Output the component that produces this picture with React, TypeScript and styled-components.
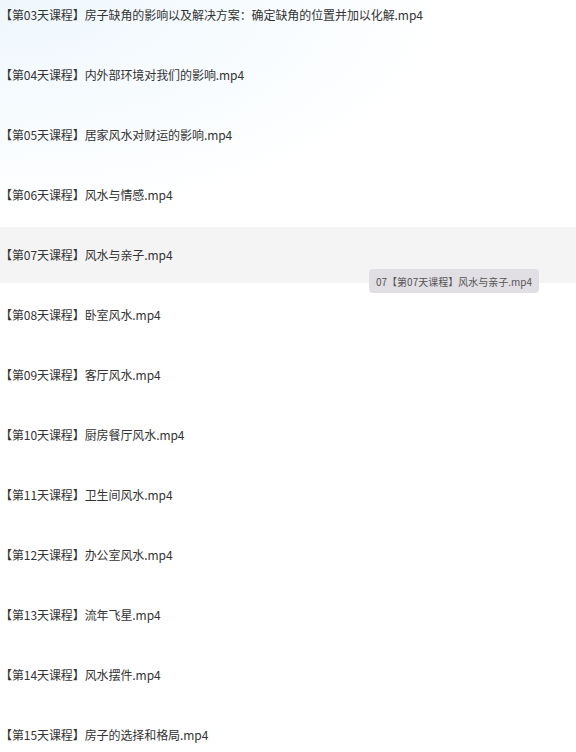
import React, { FC } from 'react'
import styled, { createGlobalStyle } from 'styled-components'

const GlobalStyle = createGlobalStyle`
  html, body {
    margin: 0;
    padding: 0;
    background: #fff;
  }
  body {
    font-family: "Noto Sans CJK SC", "Noto Sans", sans-serif;
    overflow: hidden;
  }
`

const lessons = [
  '房子缺角的影响以及解决方案：确定缺角的位置并加以化解',
  '内外部环境对我们的影响',
  '居家风水对财运的影响',
  '风水与情感',
  '风水与亲子',
  '卧室风水',
  '客厅风水',
  '厨房餐厅风水',
  '卫生间风水',
  '办公室风水',
  '流年飞星',
  '风水摆件',
  '房子的选择和格局',
]

const HOVERED = 7

const pad = (n: number) => String(n).padStart(2, '0')

const App: FC = () => (
  <>
    <GlobalStyle />
    <Page>
      <List>
        {lessons.map((title, i) => {
          const day = i + 3
          const hovered = day === HOVERED
          const name = `【第${pad(day)}天课程】${title}.mp4`
          return (
            <Row key={day} hovered={hovered}>
              <Label>{name}</Label>
              {hovered && <Tip>{pad(day)}{name}</Tip>}
            </Row>
          )
        })}
      </List>
    </Page>
  </>
)

export default App

const Page = styled.div`
  width: 576px;
  height: 752px;
  overflow: hidden;
  background:
    radial-gradient(ellipse 460px 220px at 0 0, #eef7fd 0%, rgba(255, 255, 255, 0) 100%),
    #fff;
`

const List = styled.ul`
  list-style: none;
  margin: -13px 0 0;
  padding: 0;
  display: flex;
  flex-direction: column;
  gap: 4px;
`

const Row = styled.li<{ hovered: boolean }>`
  position: relative;
  height: 56px;
  display: flex;
  align-items: center;
  background: ${p => (p.hovered ? '#f4f4f5' : 'transparent')};
`

const Label = styled.span`
  font-size: 12px;
  line-height: 16px;
  color: #333;
  letter-spacing: -0.08px;
  white-space: nowrap;
`

const Tip = styled.div`
  position: absolute;
  left: 369px;
  top: 42px;
  height: 24px;
  padding: 0 7px;
  display: flex;
  align-items: center;
  border-radius: 4px;
  background: #e1dee4;
  color: #555;
  font-size: 10px;
  white-space: nowrap;
  z-index: 2;
`
